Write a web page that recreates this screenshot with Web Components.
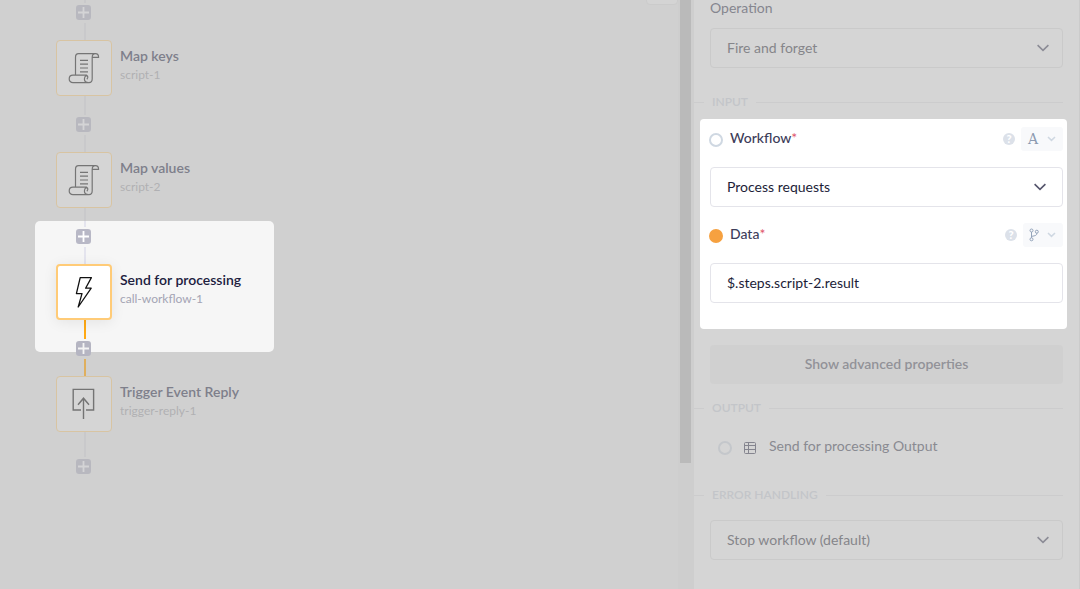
<!DOCTYPE html>
<html lang="en">
<head>
<meta charset="utf-8">
<title>Workflow editor</title>
<style>
  html, body { margin: 0; height: 100%; overflow: hidden; }
  body { background: #d0d0d0; font: 14px/20px Lato, "Liberation Sans", sans-serif; }
</style>
</head>
<body>
<workflow-editor>
  <flow-canvas slot="canvas">
    <flow-link first></flow-link>
    <flow-step name="Map keys" ref="script-1" icon="script"></flow-step>
    <flow-link></flow-link>
    <flow-step name="Map values" ref="script-2" icon="script"></flow-step>
    <flow-link lit></flow-link>
    <flow-step name="Send for processing" ref="call-workflow-1" icon="bolt" active></flow-step>
    <flow-link active></flow-link>
    <flow-step name="Trigger Event Reply" ref="trigger-reply-1" icon="reply"></flow-step>
    <flow-link last></flow-link>
  </flow-canvas>
  <property-panel slot="panel">
    <select-field label="Operation" value="Fire and forget"></select-field>
    <section-rule>INPUT</section-rule>
    <focus-group>
      <mapped-field label="Workflow" value="Process requests" kind="select" mode="text"></mapped-field>
      <mapped-field label="Data" value="$.steps.script-2.result" kind="input" mode="branch" mapped></mapped-field>
    </focus-group>
    <more-button>Show advanced properties</more-button>
    <section-rule>OUTPUT</section-rule>
    <output-row>Send for processing Output</output-row>
    <section-rule roomy>ERROR HANDLING</section-rule>
    <select-field name="Error handling" value="Stop workflow (default)"></select-field>
  </property-panel>
</workflow-editor>

<script>
const define = (tag, render) => customElements.define(tag, class extends HTMLElement {
  connectedCallback() {
    if (this.shadowRoot) return;
    this.attachShadow({ mode: 'open' }).innerHTML = render(this);
  }
});

const chevron = '<svg class="chev" width="12" height="8" viewBox="0 0 12 8" fill="none" stroke="currentColor" stroke-width="1.6" aria-hidden="true"><path d="M.6 1.2 6 6.4 11.4 1.2"/></svg>';

const icons = {
  script: '<svg width="32" height="32" viewBox="0 0 32 32" fill="none" stroke="#757575" stroke-width="1.2" stroke-linejoin="round"><path d="M7.5 23V5.2C7.5 2.8 8.6 1.6 10.6 1.6H27.4M24.2 5.4V26.8C24.2 29.2 23 30.6 21 30.6M27.4 1.6C25.4 1.6 24.2 2.9 24.2 5.4H30.6C30.6 3 29.5 1.6 27.4 1.6ZM5 23.2H18.6C16.8 24.2 16.4 25.6 16.4 27C16.4 29 17.4 30.6 20.6 30.6H5C2.6 30.6 1.2 29 1.2 26.9S2.6 23.2 5 23.2ZM18.6 23.2C20.2 24.2 20.2 26 18.8 27.2"/><path d="M12 8.4H20M12 12.2H20M12 16H20M12 19.8H20"/></svg>',
  bolt: '<svg width="32" height="32" viewBox="0 0 32 32" fill="none" stroke="#111" stroke-width="1.3" stroke-linejoin="round"><path d="M12.2 1.6H23.4L17.6 12.2H23.2L10.2 31 14 17.6H8.4Z"/></svg>',
  reply: '<svg width="32" height="32" viewBox="0 0 32 32" fill="none" stroke="#747474" stroke-width="1.4"><path d="M13 22H5.2V1.4H25.6V22H18M15.5 31V10M10 16.8 15.5 10.2 21 16.8"/></svg>'
};

const controlCss = `
  .control { display: grid; align-items: center; }
  .control > * { grid-area: 1 / 1; }
  .control .chev { justify-self: end; margin-right: var(--arrow-gap); color: var(--arrow); pointer-events: none; }
  select, .text { appearance: none; box-sizing: border-box; width: 100%; height: 40px; margin: 0; padding: 0 16px;
    border: 1px solid var(--edge); border-radius: 4px; background: none; color: var(--ink); font: inherit; outline: 0; }
  .text { padding-bottom: 2px; }`;

define('workflow-editor', () => `
  <style>
    :host { display: grid; grid-template-columns: minmax(0, 1fr) 16px 386px; height: 100vh; overflow: hidden; }
    .track { display: flex; justify-content: center; background: #cecece; }
    .thumb { width: 11px; height: 463px; margin-right: 1px; background: #bababa; }
  </style>
  <slot name="canvas"></slot>
  <div class="track"><div class="thumb"></div></div>
  <slot name="panel"></slot>`);

define('flow-canvas', () => `
  <style>
    :host { display: flex; flex-direction: column; position: relative; isolation: isolate; padding-left: 56px; overflow: hidden; }
    .tool { position: absolute; top: -27px; right: 0; width: 32px; height: 32px; box-sizing: border-box; border: 1px solid #cbcbcb; border-radius: 4px; background: #d4d4d4; }
  </style>
  <slot></slot>
  <button class="tool" type="button" aria-label="Canvas tools"></button>`);

define('flow-link', () => `
  <style>
    :host { --line: #c9c9cb; --fill: #b8b8bf; --mark: #d4d4d6; display: flex; flex-direction: column; align-items: center; flex: none; width: 56px; height: 56px; }
    :host([first]) { height: 40px; }
    :host([last]) { height: 45px; }
    :host([lit]) { --line: #e4e4ee; --fill: #b8b8c6; --mark: #fff; }
    :host([active]) { --line: #ffa914; --fill: #b5b5c2; --mark: #f4f4f4; }
    i { width: 2px; flex: 1; margin-left: 2px; background: var(--line); }
    .after { flex: none; height: 17px; }
    :host([last]) .after { display: none; }
    :host([active]) .after { background: #dfaf5e; }
    :host([lit]) i:first-of-type { background: linear-gradient(#c9c9cb 13px, #e4e4ee 13px); }
    button { display: block; flex: none; margin: 2px 1px 3px 0; padding: 0; width: 15px; height: 15px; border: 0; border-radius: 3px; background: var(--fill); color: var(--mark); }
    svg { display: block; }
  </style>
  <i></i>
  <button type="button" aria-label="Add step"><svg width="15" height="15" viewBox="0 0 15 15" stroke="currentColor" stroke-width="1.8"><path d="M7.5 2V13M2 7.5H13"/></svg></button>
  <i class="after"></i>`);

define('flow-step', el => `
  <style>
    :host { display: flex; flex: none; position: relative; height: 56px; gap: 8px; }
    .box { box-sizing: border-box; display: grid; place-items: center; width: 56px; height: 56px; padding: 0; border: 1px solid #d8c4a2; border-radius: 4px; background: #d5d5d5; }
    .words { padding-top: 6px; }
    .name { color: #7e7f8b; font-weight: 600; font-size: 14px; line-height: 20px; }
    .ref { color: #b0b0b3; font-size: 12px; line-height: 18px; }
    :host([active]) .box { border: 2px solid #ffcb77; background: #fff; box-shadow: 0 2px 14px rgba(0, 0, 0, .08); }
    :host([active]) .name { color: #20203e; }
    :host([active]) .ref { color: #a4a4b4; }
    :host([active])::before { content: ""; position: absolute; z-index: -1; left: -21px; top: -43px; width: 239px; height: 131px; border-radius: 5px; background: #f6f6f6; }
  </style>
  <button class="box" type="button" aria-label="${el.getAttribute('name')}">${icons[el.getAttribute('icon')]}</button>
  <div class="words"><div class="name">${el.getAttribute('name')}</div><div class="ref">${el.getAttribute('ref')}</div></div>`);

define('property-panel', () => `
  <style>
    :host { --edge: #cacaca; --ink: #85858a; --arrow: #8c8c96; --arrow-gap: 14px; display: block; box-sizing: border-box; padding: 0 16px; border-right: 1px solid #cbcbcb; background: #d5d5d5; overflow: hidden; }
  </style>
  <slot></slot>`);

define('select-field', el => {
  const label = el.getAttribute('label');
  return `
  <style>
    :host { display: block; }
    label { display: block; height: 18px; margin-bottom: 10px; line-height: 16px; color: #85868f; }
    ${controlCss}
  </style>
  ${label ? `<label for="c">${label}</label>` : ''}
  <div class="control"><select id="c" aria-label="${label || el.getAttribute('name')}"><option>${el.getAttribute('value')}</option></select>${chevron}</div>`;
});

define('section-rule', () => `
  <style>
    :host { display: flex; align-items: center; gap: 8px; height: 16px; margin: 26px 0 9px -16px; color: #c3c5c9; font-size: 12px; font-weight: 600; line-height: 16px; }
    :host([roomy]) { margin-bottom: 17px; }
    :host::before, :host::after { content: ""; height: 1px; background: #cccccd; }
    :host::before { width: 10px; }
    :host::after { flex: 1; }
  </style>
  <slot></slot>`);

define('focus-group', () => `
  <style>
    :host { --edge: #e4e4ea; --ink: #1d1d38; --arrow: #55556c; --arrow-gap: 17px; display: grid; gap: 16px; margin: 0 -4px 0 -10px; padding: 8px 4px 26px 10px; border-radius: 4px; background: #fff; }
  </style>
  <slot></slot>`);

define('mapped-field', el => {
  const value = el.getAttribute('value'), label = el.getAttribute('label');
  const control = el.getAttribute('kind') === 'select'
    ? `<select id="c"><option>${value}</option></select>${chevron}`
    : `<input class="text" id="c" type="text" value="${value}">`;
  const mode = el.getAttribute('mode') === 'text'
    ? '<span class="letter">A</span>'
    : '<svg width="10" height="14" viewBox="0 0 10 14" fill="none" stroke="#93a3ba" stroke-width="1"><circle cx="2.5" cy="2.5" r="1.5"/><circle cx="2.5" cy="11.3" r="1.5"/><circle cx="7.8" cy="3.7" r="1.5"/><path d="M2.5 4V9.8M7.8 5.2C7.8 7.6 6.4 7.6 2.6 8.4"/></svg>';
  return `
  <style>
    :host { display: grid; gap: 16px; }
    .head { display: flex; align-items: center; height: 24px; }
    .port { appearance: none; box-sizing: border-box; width: 14px; height: 14px; margin: 2px 7px 0 -1px; border: 2px solid #cfd8e2; border-radius: 50%; }
    :host([mapped]) .port { border-color: #f6a140; background: #f6a140; }
    label { padding-bottom: 2px; color: #3d3d5a; font-weight: 500; }
    b { color: #e0566a; font-weight: 400; }
    .help { width: 12px; height: 12px; margin: 0 6px 0 auto; padding: 0; border: 0; border-radius: 50%; background: #dce1e9; color: #fff; font: 900 11px/12px Lato, sans-serif; }
    .mode { display: flex; align-items: center; justify-content: space-between; height: 24px; width: 42px; padding: 0 7px; border: 0; border-radius: 3px; background: #f8f9fb; color: #cfd8e2; }
    :host([mapped]) .mode { width: 40px; padding-left: 6px; }
    .letter { color: #8c9bb1; font: 14px/24px "DejaVu Serif", serif; }
    ${controlCss}
  </style>
  <div class="head">
    <input class="port" type="radio" aria-label="${label} mapping">
    <label for="c">${label}<b>*</b></label>
    <button class="help" type="button" aria-label="Help">?</button>
    <button class="mode" type="button" aria-label="Value mode">${mode}<svg width="9" height="6" viewBox="0 0 9 6" fill="none" stroke="currentColor" stroke-width="1.5"><path d="M1 1 4.5 4.4 8 1"/></svg></button>
  </div>
  <div class="control">${control}</div>`;
});

define('more-button', () => `
  <style>
    :host { display: block; margin-top: 16px; margin-bottom: -10px; }
    button { width: 100%; height: 39px; padding: 0 0 2px; border: 0; border-radius: 4px; background: #d0d0d0; color: #929298; font: inherit; font-weight: 600; }
  </style>
  <button type="button"><slot></slot></button>`);

define('output-row', () => `
  <style>
    :host { display: flex; align-items: center; height: 20px; margin: 21px 0 30px; padding-left: 8px; color: #898a91; }
    .port { appearance: none; box-sizing: border-box; width: 14px; height: 14px; margin: 2px 12px 0 0; border: 2px solid #c4c7cb; border-radius: 50%; }
    svg { margin: 2px 13px 0 0; }
    label { padding-bottom: 2px; }
  </style>
  <input class="port" type="radio" id="p">
  <svg width="12" height="12" viewBox="0 0 12 12" fill="none" stroke="#85858f" stroke-width="1"><rect x=".5" y=".5" width="11" height="11" rx="1"/><path d="M.5 3.5H11.5M.5 7.5H11.5M4.5 .5V11.5" /></svg>
  <label for="p"><slot></slot></label>`);
</script>
</body>
</html>
